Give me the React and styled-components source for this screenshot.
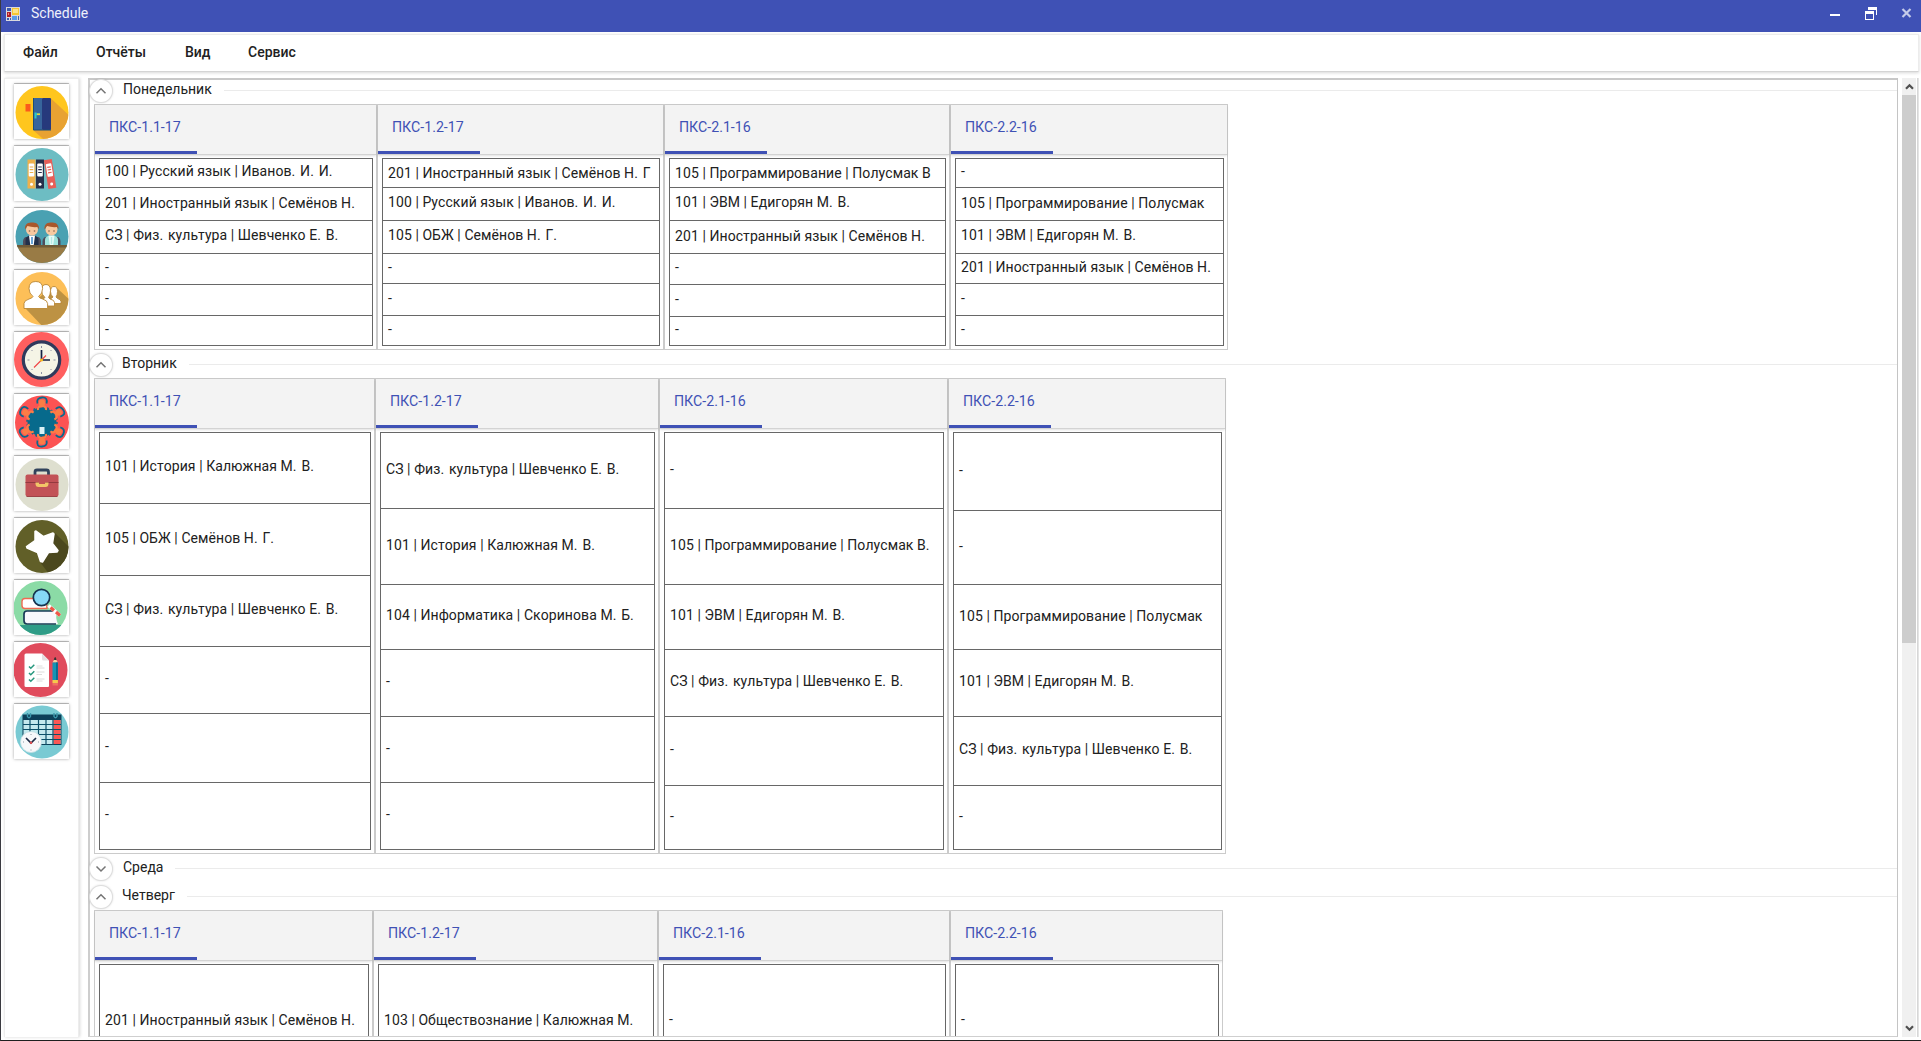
import React from "react";
import styled, { createGlobalStyle } from "styled-components";

const GlobalStyle = createGlobalStyle`
  * { box-sizing: border-box; }
  html, body { margin: 0; padding: 0; background: #fff; overflow: hidden; }
  body { font-family: Roboto, "Noto Sans", sans-serif; color: #212121; }
`;

const Window = styled.div`
  width: 1921px;
  height: 1041px;
  display: flex;
  flex-direction: column;
  border-left: 1px solid #3a3a40;
  border-bottom: 1px solid #1f1f1f;
  background: #fff;
  overflow: hidden;
`;

const TitleBar = styled.header`
  flex: 0 0 32px;
  display: flex;
  align-items: flex-start;
  background: #3f51b5;
  color: #fff;
  padding: 7px 8px 0 5px;
`;

const AppTitle = styled.span`
  flex: 1;
  margin-left: 11px;
  margin-top: -2px;
  font-size: 14px;
  line-height: 17px;
  color: #eef0fb;
`;

const WindowControls = styled.div`
  display: flex;
`;

const MenuBar = styled.nav`
  flex: 0 0 38px;
  margin: 2px 2px 0 3px;
  padding-left: 18px;
  display: flex;
  align-items: center;
  border: 1px solid #ececec;
  border-bottom-color: #d4d4d4;
  box-shadow: 0 1px 3px rgba(0, 0, 0, 0.16);
`;

const MenuItem = styled.span`
  width: ${(p) => p.$width}px;
  font-size: 14px;
  font-weight: 500;
  line-height: 18px;
  margin-top: -2px;
`;

const Workspace = styled.div`
  flex: 1;
  min-height: 0;
  display: flex;
  margin: 6px 2px 3px 3px;
`;

const Sidebar = styled.aside`
  flex: 0 0 75px;
  padding: 5px 0 0 9px;
  display: flex;
  flex-direction: column;
  gap: 7px;
  border: 1px solid #ededed;
  border-bottom: 0;
  box-shadow: 1px 0 3px rgba(0, 0, 0, 0.16);
`;

const ToolButton = styled.button`
  width: 55px;
  height: 55px;
  flex: none;
  padding: 0;
  border: 0;
  background: #fff;
  box-shadow: 0 0 3px rgba(0, 0, 0, 0.35), 0 -1px 0 rgba(0, 0, 0, 0.2);
  svg { display: block; }
`;

const Schedule = styled.main`
  flex: 0 0 1810px;
  margin-left: 9px;
  overflow: hidden;
  border-right: 1px solid #c4c4c4;
  border-bottom: 1px solid #cfcfcf;
  box-shadow: inset 0 2px 0 #c8c8c8, inset 2px 0 0 #cdcdcd;
`;

const Days = styled.div`
  margin-top: -2px;
  padding-left: 2px;
`;

const DayHeader = styled.div`
  height: 28px;
  display: flex;
  align-items: center;
`;

const Expander = styled.span`
  width: 22px;
  height: 22px;
  margin-top: 1px;
  margin-right: ${(p) => p.$gap}px;
  border-radius: 50%;
  background: #fff;
  box-shadow: 0 0 0 1px #dedede, 0 0 3px rgba(0, 0, 0, 0.3);
  display: flex;
  align-items: center;
  justify-content: center;
  svg { display: block; }
`;

const DayName = styled.span`
  font-size: 14px;
  line-height: 18px;
  margin-top: -2px;
  margin-right: 12px;
`;

const DayRule = styled.span`
  flex: 1;
  height: 1px;
  margin-top: 1px;
  background: #ebebeb;
`;

const Groups = styled.div`
  display: flex;
  margin-left: 4px;
`;

const GroupPanel = styled.section`
  width: ${(p) => p.$width}px;
  border: 1px solid #cbcbcb;
  padding-bottom: 3px;
`;

const GroupTab = styled.div`
  height: 50px;
  display: flex;
  background: #f3f3f3;
  border-bottom: 1px solid #d3d3d3;
  box-shadow: 0 1px 2px rgba(0, 0, 0, 0.12);
`;

const TabLabel = styled.span`
  width: 102px;
  height: 49px;
  padding: 13px 0 0 14px;
  border-bottom: 3px solid #3f51b5;
  color: #3f51b5;
  font-size: 14.2px;
  line-height: 18px;
`;

const Lessons = styled.div`
  margin: 3px 3px 0 4px;
  border: 1px solid #676767;
  background: #fff;
`;

const Lesson = styled.div`
  height: ${(p) => p.$height}px;
  display: flex;
  align-items: center;
  padding: 0 0 ${(p) => 4 + p.$lift * 2}px 5px;
  overflow: hidden;
  white-space: nowrap;
  font-size: 14px;
  font-kerning: none;
  letter-spacing: 0.075px;
  line-height: 16px;
  & + & { border-top: 1px solid #676767; }
`;

const Abbreviation = styled.span`
  margin-right: 1.2px;
`;

const ScrollBar = styled.div`
  width: 15px;
  margin-left: 4px;
  background: #f0f0f0;
  display: flex;
  flex-direction: column;
`;

const ScrollArrow = styled.div`
  height: 17px;
  display: flex;
  align-items: center;
  justify-content: center;
`;

const ScrollThumb = styled.div`
  height: 548px;
  background: #cdcdcd;
`;

const ScrollSpace = styled.div`
  flex: 1;
`;

const RightEdge = styled.div`
  width: 2px;
  margin-left: 1px;
  background: linear-gradient(90deg, #d0d0d0, #ececec);
`;

const Icon = ({ children }) => (
  <svg width="55" height="55" viewBox="0 0 55 55">{children}</svg>
);

const DoorIcon = () => (
  <Icon>
    <clipPath id="door"><circle cx="28" cy="28.5" r="26.5" /></clipPath>
    <circle cx="28" cy="28.5" r="26.5" fill="#ffc61e" />
    <path clipPath="url(#door)" d="M37 14.5 60 36v25H36L19 46z" fill="#e8a232" />
    <rect x="11.500" y="20" width="5" height="7.500" fill="#fb5a1c" />
    <rect x="19.5" y="14" width="9" height="32" rx="1" fill="#37659c" />
    <rect x="28" y="14" width="9" height="32" rx="1" fill="#26397c" />
    <path d="M19.5 14v32h17.5" fill="none" stroke="#1d4e77" strokeWidth="1" />
    <path d="M21.5 28.5v6M21.5 30.3h4.5" stroke="#2ec7c4" strokeWidth="2" />
    <rect x="23" y="29.5" width="3" height="1.5" fill="#e7d03e" />
  </Icon>
);

const Binder = ({ x, fill, rotate }) => (
  <g transform={`translate(${x} 13.5) rotate(${rotate} 4 14)`}>
    <rect width="8" height="29" fill={fill} />
    <rect x="1.2" y="4" width="5.6" height="13" rx="1" fill="#fff" />
    <path d="M2.2 7.5h3.6M2.2 10.2h3.6M2.2 13h3.6" stroke={fill} strokeWidth="1.2" />
    <circle cx="4" cy="24.7" r="1.5" fill="#fff" />
  </g>
);

const BindersIcon = () => (
  <Icon>
    <circle cx="28" cy="28.5" r="26.5" fill="#6dbdc3" />
    <Binder x={13.5} fill="#eeb04b" rotate={0} />
    <Binder x={22} fill="#262f4b" rotate={0} />
    <Binder x={32} fill="#e85f58" rotate={-9} />
  </Icon>
);

const Person = ({ x, jacket, shirt, tie }) => (
  <g transform={`translate(${x} 0)`}>
    <path d="M-9 38v-5q1-4 3-4h12q2 0 3 4v5z" fill="#4e4c5b" />
    <path d="M-6.5 38v-6q0-4 5-4.5h3q5 .5 5 4.5v6z" fill={jacket} />
    <path d="M-3 27.5h6L1.6 38h-3.2z" fill={shirt} />
    <path d="M0 29v7" stroke={tie} strokeWidth="1.4" />
    <circle cx="0" cy="21.500" r="6" fill="#f7c9a0" />
    <path d="M-7 21.500C-7.500 15-3 14.500 0 14.500s7.500.5 7 7l-1.500-2.500Q0 19.500-4.500 18z" fill="#a9572b" />
    <path d="M-2.500 22.500v1M2.500 22.500v1" stroke="#684332" strokeWidth="1.400" />
  </g>
);

const MeetingIcon = () => (
  <Icon>
    <clipPath id="desk"><circle cx="28" cy="28.500" r="26.500" /></clipPath>
    <circle cx="28" cy="28.500" r="26.500" fill="#4aa1b2" />
    <Person x={18} jacket="#22304a" shirt="#fff" tie="#2b80c9" />
    <Person x={37.500} jacket="#9fe3dc" shirt="#e9fbf8" tie="#b5eae4" />
    <g clipPath="url(#desk)">
      <path d="M0 37h56v20H0z" fill="#997b45" />
      <path d="M0 37h56v2.500H0z" fill="#6f5a37" />
    </g>
  </Icon>
);

const PeopleIcon = () => (
  <Icon>
    <clipPath id="crowd"><circle cx="28" cy="28.500" r="26.500" /></clipPath>
    <circle cx="28" cy="28.500" r="26.500" fill="#fdbf58" />
    <path clipPath="url(#crowd)" d="M12 39 32 60h26V32L44 19l-8-1z" fill="#bd9243" />
    <g fill="#fff" stroke="#b98735" strokeWidth=".9">
      <path d="M37 33.500v-5l2-1.500q-2.500-2-2.500-5.500 0-5 3.500-5t3.500 5q0 3.500-1.500 5.500l1.500 1.500q3.500 1 3.500 3v2z" />
      <path d="M28 36v-6l3-2.500q-3.500-3-3.500-7 0-6 4.500-6t4.500 6q0 4-2 7l1.500 1.500q4.500 1 4.500 3.500V36z" />
      <path d="M10 38.500v-5q0-3 5-4.500 3.500-1 4-2.500-4-3-4-8 0-7 6.800-7t6.800 7q0 5-4 8 .5 1.500 4 2.500 5 1.500 5 4.500v5z" />
    </g>
  </Icon>
);

const ClockIcon = () => (
  <Icon>
    <circle cx="27.500" cy="27.500" r="27.500" fill="#ff5f5f" />
    <circle cx="27.500" cy="28" r="18.200" fill="#f5f4e6" stroke="#303a5c" strokeWidth="3.200" />
    <path d="M27.500 14v2M27.500 40v2M13.500 28h2M39.500 28h2M17.500 18l1 1M37.500 18l-1 1M37.500 38l-1-1M17.500 38l1-1" stroke="#8f92a4" />
    <path d="M27.500 28v-10M27.500 28h8.500" stroke="#151f42" strokeWidth="1.700" />
    <path d="M20 35.500 32 23.500" stroke="#f04040" strokeWidth="1.100" />
    <circle cx="27.500" cy="28" r="1.600" fill="#f5bd22" />
  </Icon>
);

const TableIcon = () => (
  <Icon>
    <circle cx="28" cy="28.500" r="27" fill="#fc5353" />
    <circle cx="28" cy="28" r="14.500" fill="#076a8c" />
    <circle cx="28" cy="28" r="15" fill="none" stroke="#076a8c" strokeWidth="1.500" strokeDasharray="2 2.712" />
    {[0, 60, 120, 180, 240, 300].map((angle) => (
      <g key={angle} transform={`rotate(${angle} 28 28)`}>
        <path d="M23.500 9.500q-1.500-5.500 4.500-6t4.500 6" fill="none" stroke="#076a8c" strokeWidth="1.800" />
        <path d="M24 16q-.5-4 4-4t4 4" fill="none" stroke="#fb7d45" strokeWidth="2.200" />
        <circle cx="28" cy="8.800" r="3.200" fill="#fb7d45" />
      </g>
    ))}
    <rect x="25.500" y="33" width="5" height="7" fill="#d9f1f6" />
  </Icon>
);

const BriefcaseIcon = () => (
  <Icon>
    <circle cx="28" cy="28.500" r="26.500" fill="#dedfcf" />
    <path d="M21 19v-3q0-2 2-2h9.500q2 0 2 2v3" fill="none" stroke="#31435c" strokeWidth="2.800" />
    <rect x="11.500" y="18.500" width="33" height="22" rx="2" fill="#c25257" />
    <path d="M11.500 26.500h33" stroke="#93393f" strokeWidth="1" />
    <path d="M21.500 26.500h13v1q0 3.500-3 3.500h-7q-3 0-3-3.500z" fill="#f2c568" />
    <rect x="25" y="25" width="6" height="3" fill="#c25257" />
    <path d="M12.500 40.500h31" stroke="#9d4347" strokeWidth="1" />
  </Icon>
);

const StarIcon = () => (
  <Icon>
    <clipPath id="star"><circle cx="28" cy="28.500" r="26.500" /></clipPath>
    <circle cx="28" cy="28.500" r="26.500" fill="#615f28" />
    <path clipPath="url(#star)" d="M41 15 60 34v26H38L26 44z" fill="#4b481e" />
    <path d="M22 13 29.500 18.500l9.500-3.500 1 1-1.500 9.500 5.500 7-1 1.500-8.500.5-6 9.500-2-.5-3-9L13 30l-.5-1.500 8.500-6 0-9z" fill="#fff" stroke="#fff" strokeWidth="1.500" strokeLinejoin="round" />
  </Icon>
);

const BooksIcon = () => (
  <Icon>
    <clipPath id="books"><circle cx="26.500" cy="28" r="27" /></clipPath>
    <circle cx="26.500" cy="28" r="27" fill="#8bdba6" />
    <path clipPath="url(#books)" d="M0 45h55v12H0z" fill="#2f9c87" />
    <path d="M32 18.500H11q-3 0-3 3v4q0 3 3 3h22z" fill="#fff" stroke="#ef6b52" strokeWidth="1.400" />
    <path d="M43 31H13q-3 0-3 3v6.500q0 3.500 3 3.500h31q-3-6-1-13z" fill="#f8f8fc" />
    <path d="M42.500 31H13q-3 0-3 3v6.500q0 3.500 3 3.500h29" fill="none" stroke="#173a56" strokeWidth="1.700" />
    <path d="M34.500 25.500 46 35.500" stroke="#fff" strokeWidth="3.600" />
    <path d="M36.500 27.500 40 30.500M42 32l4 3.500" stroke="#ee5748" strokeWidth="3.200" />
    <circle cx="27.500" cy="17.500" r="8.200" fill="#86d8f6" stroke="#15334f" strokeWidth="1.700" />
  </Icon>
);

const ChecklistIcon = () => (
  <Icon>
    <circle cx="26.500" cy="28" r="27" fill="#e04b5c" />
    <path d="M12 11.500h16l7 7V44q0 1-1 1H12q-1.500 0-1.500-1.500V13q0-1.500 1.500-1.500z" fill="#fff" />
    <path d="M28 11.500v5.500q0 1.500 1.500 1.500H35z" fill="#e5dfe1" />
    <path d="M15 24.500l1.800 1.800 3.500-3.500M15 31l1.800 1.800 3.500-3.500M15 37.500l1.800 1.800 3.500-3.500" fill="none" stroke="#26977d" strokeWidth="1.500" />
    <path d="M22.500 24h6M22.500 26h8M22.500 30h8M22.500 32.500h5.500M22.500 37h8M22.500 39h6" stroke="#dcdcdc" strokeWidth="1" />
    <path d="M38.500 20.500l2.700-4.500 2.700 4.500z" fill="#f4d3a1" />
    <path d="M40.300 17.500l.9-2 .9 2z" fill="#333" stroke="#333" />
    <rect x="38.500" y="20.500" width="5.400" height="17.500" fill="#1594b4" />
    <rect x="42" y="20.500" width="1.900" height="17.500" fill="#0a6c91" />
    <rect x="38.500" y="38" width="5.400" height="3" fill="#f5c94b" />
    <rect x="38.500" y="41" width="5.400" height="2.500" fill="#ef7161" />
  </Icon>
);

const CalendarIcon = () => (
  <Icon>
    <circle cx="28" cy="28" r="26.500" fill="#79cad3" />
    <rect x="8.500" y="10.500" width="39" height="30.500" fill="#0d4059" />
    <rect x="9.500" y="16" width="37" height="24" fill="#c4e9ee" />
    <rect x="39.500" y="16" width="7" height="24" fill="#fb5754" />
    <path d="M9 20.500h38M9 25.500h38M9 30.500h38M9 35.500h38M16 16v25M24.500 16v25M32 16v25M39 16v25" stroke="#0d5069" strokeWidth="1.200" />
    <path d="M13.500 9v3.500q1.500 2.500 3 0V9M40 9v3.500q1.500 2.500 3 0V9" fill="none" stroke="#3c98ac" strokeWidth="1.400" />
    <circle cx="17" cy="38" r="10.500" fill="#f7f8fa" stroke="#c3dfe4" strokeWidth=".8" />
    <path d="M12 34 17 39l5-5" fill="none" stroke="#1d2b46" strokeWidth="1.700" />
    <circle cx="17" cy="38.800" r="1.300" fill="#df4e52" />
    <path d="M17 30v1M17 45.500v1M9 38h1M24 38h1" stroke="#8c9aa5" />
  </Icon>
);

const AppIcon = () => (
  <svg width="14" height="14" viewBox="0 0 14 14" shapeRendering="crispEdges">
    <rect width="14" height="14" fill="#d9d9dd" />
    <rect x="1" y="1" width="4" height="3" fill="#3d5bb0" />
    <rect x="6" y="1" width="7" height="7" fill="#f7c631" />
    <rect x="7" y="2" width="5" height="4" fill="#fbe38a" />
    <rect x="1" y="5" width="4" height="5" fill="#b11f28" />
    <rect x="2" y="6" width="1" height="2" fill="#ec8f85" />
    <rect x="1" y="11" width="2" height="2" fill="#3d5bb0" />
    <rect x="4" y="11" width="1" height="2" fill="#3d5bb0" />
    <rect x="6" y="9" width="5" height="4" fill="#5b9be8" />
    <rect x="12" y="9" width="1" height="4" fill="#3d5bb0" />
  </svg>
);

const ControlIcons = () => (
  <svg width="84" height="16" viewBox="0 0 84 16">
    <g shapeRendering="crispEdges" fill="#fff">
      <rect x="1" y="7" width="10" height="2" />
      <path d="M39 0h9v8h-1V3h-8z" />
      <path d="M36 4h9v9h-9zM37 7v5h7V7z" fillRule="evenodd" />
    </g>
    <path d="M73.500 2l8 8M81.500 2l-8 8" stroke="#c5cbe9" strokeWidth="2.200" />
  </svg>
);

const Chevron = ({ down }) => (
  <svg width="12" height="8" viewBox="0 0 12 8">
    <path d={down ? "M1.500 1.500 6 6l4.500-4.500" : "M1.500 6.300 6 1.800l4.500 4.500"} fill="none" stroke="#757575" strokeWidth="1.500" />
  </svg>
);

const ScrollGlyph = ({ down }) => (
  <svg width="9" height="7" viewBox="0 0 9 7">
    <path d={down ? "M1 1.200l3.500 3.500L8 1.200" : "M1 5.800l3.500-3.500L8 5.800"} fill="none" stroke="#505050" strokeWidth="2.200" />
  </svg>
);

const tools = [
  DoorIcon, BindersIcon, MeetingIcon, PeopleIcon, ClockIcon, TableIcon,
  BriefcaseIcon, StarIcon, BooksIcon, ChecklistIcon, CalendarIcon,
];

const menu = [["Файл", 73], ["Отчёты", 89], ["Вид", 63], ["Сервис", 60]];

const none = "-";
const FR = "201 | Иностранный язык | Семёнов Н.";
const RU = "100 | Русский язык | Иванов. И. И.";
const PE = "СЗ | Физ. культура | Шевченко Е. В.";
const OBJ = "105 | ОБЖ | Семёнов Н. Г.";
const EVM = "101 | ЭВМ | Едигорян М. В.";
const HIST = "101 | История | Калюжная М. В.";
const PROG = "105 | Программирование | Полусмак";

// Each row is [text, height, lift]; lift nudges the text line up or down.
const days = [
  {
    name: "Понедельник", gap: 11,
    groups: [
      { name: "ПКС-1.1-17", width: 283, rows: [[RU, 28], [FR, 33, -1], [PE, 33], [none, 31], [none, 31], [none, 30]] },
      { name: "ПКС-1.2-17", width: 287, rows: [["201 | Иностранный язык | Семёнов Н. Г", 28, -1.5], [RU, 33], [OBJ, 33], [none, 30], [none, 32], [none, 30]] },
      { name: "ПКС-2.1-16", width: 286, rows: [["105 | Программирование | Полусмак В", 28, -1.5], [EVM, 33], [FR, 33, -1], [none, 31], [none, 32], [none, 29]] },
      { name: "ПКС-2.2-16", width: 278, rows: [[none, 28], [PROG, 33, -1], [EVM, 33], [FR, 30], [none, 32], [none, 30]] },
    ],
  },
  {
    name: "Вторник", gap: 10,
    groups: [
      { name: "ПКС-1.1-17", width: 281, rows: [[HIST, 70], [OBJ, 72], [PE, 71], [none, 67], [none, 69], [none, 67]] },
      { name: "ПКС-1.2-17", width: 284, rows: [[PE, 75], [HIST, 76], ["104 | Информатика | Скоринова М. Б.", 65], [none, 67], [none, 66], [none, 67]] },
      { name: "ПКС-2.1-16", width: 289, rows: [[none, 75], ["105 | Программирование | Полусмак В.", 76], [EVM, 65], [PE, 67], [none, 69], [none, 64]] },
      { name: "ПКС-2.2-16", width: 278, rows: [[none, 77], [none, 74], [PROG, 65, -1], [EVM, 67], [PE, 69], [none, 64]] },
    ],
  },
  { name: "Среда", gap: 11, groups: null },
  {
    name: "Четверг", gap: 10,
    groups: [
      { name: "ПКС-1.1-17", width: 279, rows: [[FR, 112, -1], ["", 60]] },
      { name: "ПКС-1.2-17", width: 285, rows: [["103 | Обществознание | Калюжная М.", 112, -1], ["", 60]] },
      { name: "ПКС-2.1-16", width: 292, rows: [[none, 112], ["", 60]] },
      { name: "ПКС-2.2-16", width: 273, rows: [[none, 112], ["", 60]] },
    ],
  },
];

const LessonText = ({ text }) => {
  const parts = text.split(/(?<=\.) /);
  return (
    <span>
      {parts.map((part, i) =>
        i < parts.length - 1
          ? <Abbreviation key={i}>{part + " "}</Abbreviation>
          : part
      )}
    </span>
  );
};

const Group = ({ name, width, rows }) => (
  <GroupPanel $width={width}>
    <GroupTab><TabLabel>{name}</TabLabel></GroupTab>
    <Lessons>
      {rows.map(([text, height, lift = 0], i) => (
        <Lesson key={i} $height={height} $lift={lift}><LessonText text={text} /></Lesson>
      ))}
    </Lessons>
  </GroupPanel>
);

export default function App() {
  return (
    <>
      <GlobalStyle />
      <Window>
        <TitleBar>
          <AppIcon />
          <AppTitle>Schedule</AppTitle>
          <WindowControls><ControlIcons /></WindowControls>
        </TitleBar>
        <MenuBar>
          {menu.map(([label, width]) => <MenuItem key={label} $width={width}>{label}</MenuItem>)}
        </MenuBar>
        <Workspace>
          <Sidebar>
            {tools.map((Tool, i) => <ToolButton key={i}><Tool /></ToolButton>)}
          </Sidebar>
          <Schedule>
            <Days>
              {days.map((day) => (
                <section key={day.name}>
                  <DayHeader>
                    <Expander $gap={day.gap}><Chevron down={!day.groups} /></Expander>
                    <DayName>{day.name}</DayName>
                    <DayRule />
                  </DayHeader>
                  {day.groups && (
                    <Groups>
                      {day.groups.map((g) => <Group key={g.name} {...g} />)}
                    </Groups>
                  )}
                </section>
              ))}
            </Days>
          </Schedule>
          <ScrollBar>
            <ScrollArrow><ScrollGlyph /></ScrollArrow>
            <ScrollThumb />
            <ScrollSpace />
            <ScrollArrow><ScrollGlyph down /></ScrollArrow>
          </ScrollBar>
          <RightEdge />
        </Workspace>
      </Window>
    </>
  );
}
